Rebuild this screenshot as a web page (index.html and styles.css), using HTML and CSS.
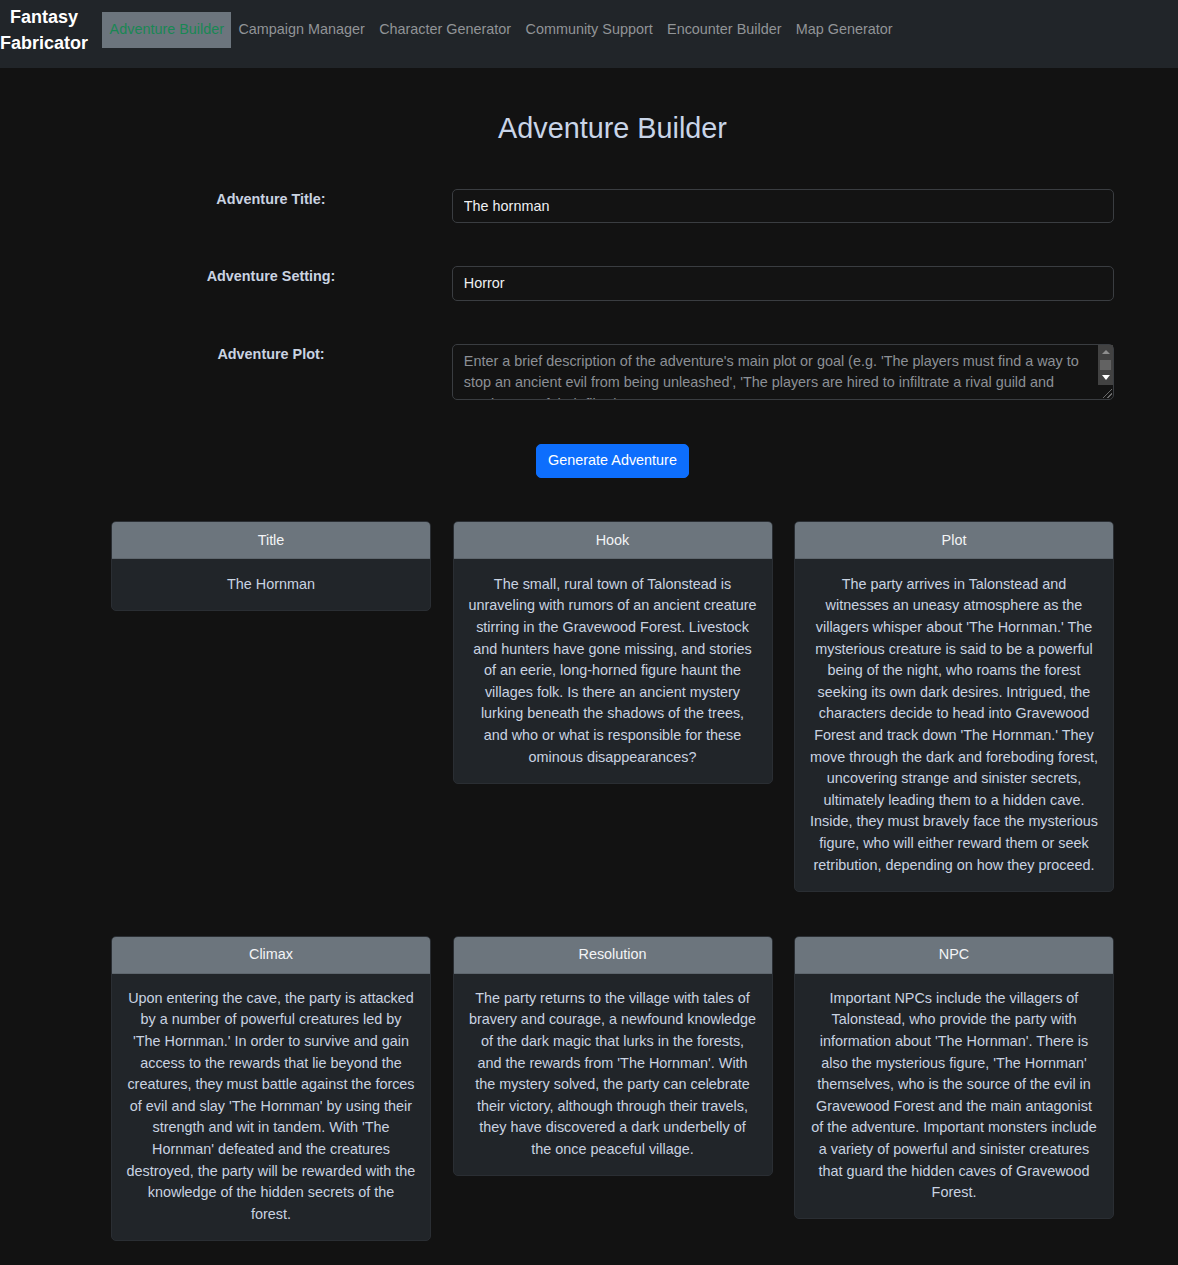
FILE: index.html
```html
<!DOCTYPE html>
<html lang="en">
<head>
<meta charset="utf-8">
<title>Adventure Builder - Fantasy Fabricator</title>
<link rel="stylesheet" href="styles.css">
</head>
<body>
<nav class="navbar">
  <a class="brand" href="#">Fantasy<br>Fabricator</a>
  <ul class="nav-links">
    <li><a class="nav-link active" href="#">Adventure Builder</a></li>
    <li><a class="nav-link" href="#">Campaign Manager</a></li>
    <li><a class="nav-link" href="#">Character Generator</a></li>
    <li><a class="nav-link" href="#">Community Support</a></li>
    <li><a class="nav-link" href="#">Encounter Builder</a></li>
    <li><a class="nav-link" href="#">Map Generator</a></li>
  </ul>
</nav>

<main class="container">
  <h1 class="page-title">Adventure Builder</h1>

  <form class="builder-form">
    <div class="form-row">
      <label class="form-label" for="title">Adventure Title:</label>
      <div class="form-field"><input class="form-control" id="title" type="text" value="The hornman"></div>
    </div>
    <div class="form-row">
      <label class="form-label" for="setting">Adventure Setting:</label>
      <div class="form-field"><input class="form-control" id="setting" type="text" value="Horror"></div>
    </div>
    <div class="form-row form-row-last">
      <label class="form-label" for="plot">Adventure Plot:</label>
      <div class="form-field textarea-wrap">
        <textarea class="form-control textarea" id="plot" rows="2" placeholder="Enter a brief description of the adventure's main plot or goal (e.g. 'The players must find a way to stop an ancient evil from being unleashed', 'The players are hired to infiltrate a rival guild and steal some of their files')"></textarea>
        <span class="fake-scrollbar" aria-hidden="true">
          <span class="sb-up"></span>
          <span class="sb-thumb"></span>
          <span class="sb-down"></span>
        </span>
        <span class="resize-grip" aria-hidden="true"></span>
      </div>
    </div>
    <div class="btn-row">
      <button class="btn-primary" type="button">Generate Adventure</button>
    </div>
  </form>

  <section class="card-grid">
    <div class="card">
      <div class="card-header">Title</div>
      <div class="card-body">The Hornman</div>
    </div>
    <div class="card">
      <div class="card-header">Hook</div>
      <div class="card-body">The small, rural town of Talonstead is unraveling with rumors of an ancient creature stirring in the Gravewood Forest. Livestock and hunters have gone missing, and stories of an eerie, long-horned figure haunt the villages folk. Is there an ancient mystery lurking beneath the shadows of the trees, and who or what is responsible for these ominous disappearances?</div>
    </div>
    <div class="card">
      <div class="card-header">Plot</div>
      <div class="card-body">The party arrives in Talonstead and witnesses an uneasy atmosphere as the villagers whisper about 'The Hornman.' The mysterious creature is said to be a powerful being of the night, who roams the forest seeking its own dark desires. Intrigued, the characters decide to head into Gravewood Forest and track down 'The Hornman.' They move through the dark and foreboding forest, uncovering strange and sinister secrets, ultimately leading them to a hidden cave. Inside, they must bravely face the mysterious figure, who will either reward them or seek retribution, depending on how they proceed.</div>
    </div>
    <div class="card">
      <div class="card-header">Climax</div>
      <div class="card-body">Upon entering the cave, the party is attacked by a number of powerful creatures led by 'The Hornman.' In order to survive and gain access to the rewards that lie beyond the creatures, they must battle against the forces of evil and slay 'The Hornman' by using their strength and wit in tandem. With 'The Hornman' defeated and the creatures destroyed, the party will be rewarded with the knowledge of the hidden secrets of the forest.</div>
    </div>
    <div class="card">
      <div class="card-header">Resolution</div>
      <div class="card-body">The party returns to the village with tales of bravery and courage, a newfound knowledge of the dark magic that lurks in the forests, and the rewards from 'The Hornman'. With the mystery solved, the party can celebrate their victory, although through their travels, they have discovered a dark underbelly of the once peaceful village.</div>
    </div>
    <div class="card">
      <div class="card-header">NPC</div>
      <div class="card-body">Important NPCs include the villagers of Talonstead, who provide the party with information about 'The Hornman'. There is also the mysterious figure, 'The Hornman' themselves, who is the source of the evil in Gravewood Forest and the main antagonist of the adventure. Important monsters include a variety of powerful and sinister creatures that guard the hidden caves of Gravewood Forest.</div>
    </div>
  </section>
</main>
</body>
</html>
```

FILE: styles.css
```css
* {
  box-sizing: border-box;
}

html {
  font-size: 14.4px;
}

body {
  margin: 0;
  background: #121212;
  color: #c9d3e1;
  font-family: "Liberation Sans", Arial, sans-serif;
  font-size: 14.4px;
  line-height: 1.5;
  color-scheme: dark;
}

/* Navbar */
.navbar {
  height: 68px;
  background: #212529;
  display: flex;
  align-items: center;
  padding: 0 0 8px 0;
}

.brand {
  display: block;
  font-size: 18px;
  font-weight: bold;
  line-height: 26px;
  color: #ffffff;
  text-decoration: none;
  text-align: center;
  margin-right: 14.4px;
}

.nav-links {
  list-style: none;
  margin: 0;
  padding: 0;
  display: flex;
  align-items: center;
}

.nav-link {
  display: block;
  padding: 7px 7.2px;
  color: #919497;
  text-decoration: none;
  line-height: 21.6px;
}

.nav-link.active {
  background: #6c757d;
  color: #198754;
}

/* Main */
.container {
  width: 1003px;
  margin-left: 111px;
}

.page-title {
  margin: 43px 0 0 0;
  font-size: 28.8px;
  font-weight: 500;
  line-height: 1.2;
  text-align: center;
  color: #c9d5e8;
}

.builder-form {
  margin-top: 43px;
}

.form-row {
  display: flex;
  gap: 21px;
  align-items: flex-start;
  margin-bottom: 43.2px;
}

.form-row-last {
  margin-bottom: 44px;
}

.form-label {
  width: 320px;
  flex: none;
  text-align: center;
  font-weight: bold;
  line-height: 21.6px;
}

.form-field {
  flex: 1;
}

.form-control {
  display: block;
  width: 100%;
  height: 34.4px;
  padding: 5.4px 10.8px;
  font-family: inherit;
  font-size: 14.4px;
  line-height: 21.6px;
  color: #eef0f2;
  background: #131313;
  border: 1px solid #3a3d41;
  border-radius: 5px;
  outline: none;
}

.textarea-wrap {
  position: relative;
}

.textarea {
  height: 56px;
  resize: none;
  overflow: hidden;
  padding-top: 6px;
  padding-right: 25.8px;
}

.textarea::placeholder {
  color: #8c9096;
}

.fake-scrollbar {
  position: absolute;
  top: 1px;
  right: 1px;
  width: 15px;
  height: 40px;
  background: #424242;
  display: flex;
  flex-direction: column;
  align-items: center;
}

.sb-up {
  margin-top: 5px;
  width: 0;
  height: 0;
  border-left: 4px solid transparent;
  border-right: 4px solid transparent;
  border-bottom: 4px solid #8e8e8e;
}

.sb-thumb {
  margin-top: 6px;
  width: 11px;
  height: 10px;
  background: #626262;
}

.sb-down {
  margin-top: 5px;
  width: 0;
  height: 0;
  border-left: 4.5px solid transparent;
  border-right: 4.5px solid transparent;
  border-top: 5px solid #ffffff;
}

.resize-grip {
  position: absolute;
  right: 2px;
  bottom: 2px;
  width: 9px;
  height: 9px;
  background: linear-gradient(135deg,
    transparent 0 45%, #6a6a6a 45% 52%, transparent 52% 72%, #6a6a6a 72% 80%, transparent 80%);
}

.btn-row {
  display: flex;
  justify-content: center;
}

.btn-primary {
  font-family: inherit;
  font-size: 14.4px;
  line-height: 21.6px;
  padding: 5.4px 10.8px;
  color: #ffffff;
  background: #0d6efd;
  border: 1px solid #0d6efd;
  border-radius: 5px;
  cursor: pointer;
}

/* Cards */
.card-grid {
  margin-top: 43.4px;
  display: grid;
  grid-template-columns: repeat(3, 320px);
  column-gap: 21.5px;
  row-gap: 44px;
  align-items: start;
  padding-bottom: 40px;
}

.card {
  background: #212529;
  border: 1px solid #2a2e33;
  border-radius: 5px;
  overflow: hidden;
}

.card-header {
  background: #6c757d;
  color: #f3f4f6;
  text-align: center;
  padding: 7.2px 14.4px;
  line-height: 21.6px;
  border-bottom: 1px solid #5f676e;
}

.card-body {
  padding: 14.4px;
  text-align: center;
  line-height: 21.6px;
}
```
